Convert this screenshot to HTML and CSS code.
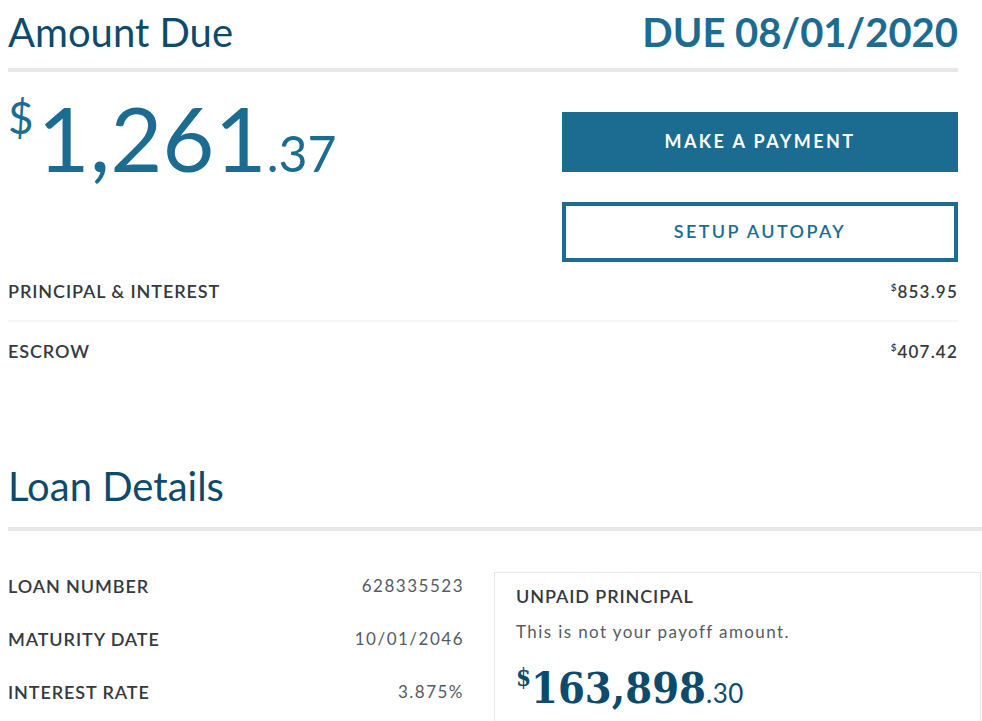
FILE: index.html
```html
<!DOCTYPE html>
<html>
<head>
<meta charset="utf-8">
<link rel="stylesheet" href="styles.css">
</head>
<body>
<section class="due">
  <header class="due-head">
    <h1 class="title">Amount Due</h1>
    <div class="due-date">DUE 08/01/2020</div>
  </header>
  <div class="due-body">
    <div class="amount"><span class="cur">$</span><span class="whole">1,261</span><span class="cents">.37</span></div>
    <div class="actions">
      <a class="btn btn-solid">MAKE A PAYMENT</a>
      <a class="btn btn-outline">SETUP AUTOPAY</a>
    </div>
  </div>
  <div class="breakdown">
    <div class="brow"><span class="blabel">PRINCIPAL &amp; INTEREST</span><span class="bval"><sup>$</sup>853.95</span></div>
    <div class="brow"><span class="blabel">ESCROW</span><span class="bval"><sup>$</sup>407.42</span></div>
  </div>
</section>
<section class="loan">
  <h2 class="title loan-title">Loan Details</h2>
  <div class="loan-body">
    <dl class="facts">
      <div class="fact"><dt>LOAN NUMBER</dt><dd>628335523</dd></div>
      <div class="fact"><dt>MATURITY DATE</dt><dd>10/01/2046</dd></div>
      <div class="fact"><dt>INTEREST RATE</dt><dd>3.875%</dd></div>
    </dl>
    <div class="card">
      <div class="card-label">UNPAID PRINCIPAL</div>
      <p class="card-note">This is not your payoff amount.</p>
      <div class="principal"><span class="pcur">$</span><span class="pwhole">163,898</span><span class="pcents">.30</span></div>
    </div>
  </div>
</section>
</body>
</html>
```
FILE: styles.css
```css
html, body { background: #fff; }
body {
  margin: 0;
  padding: 8px 8px 0;
  font-family: Lato, "Open Sans", sans-serif;
  color: #343a40;
  overflow: hidden;
}
.due { width: 950px; }
.due-head {
  display: flex;
  justify-content: space-between;
  align-items: baseline;
  border-bottom: 4px solid #e8e8e8;
  padding-bottom: 12px;
}
.title {
  margin: 0;
  font-size: 40px;
  line-height: 48px;
  font-weight: 400;
  color: #0d4a6b;
}
.due-date {
  font-size: 40px;
  line-height: 48px;
  font-weight: 700;
  color: #1c6b91;
}
.due-body {
  display: grid;
  grid-template-columns: 1fr 396px;
}
.amount {
  color: #1c6b91;
  line-height: 90px;
  padding-top: 20px;
}
.cur {
  font-size: 44px;
  vertical-align: top;
  position: relative;
  top: -20px;
  margin-right: 4px;
}
.whole { font-size: 90px; }
.cents { font-size: 50px; }
.actions {
  padding-top: 40px;
  display: flex;
  flex-direction: column;
  gap: 30px;
}
.btn {
  display: flex;
  align-items: center;
  justify-content: center;
  height: 60px;
  box-sizing: border-box;
  padding-bottom: 3px;
  font-size: 18px;
  font-weight: 700;
  letter-spacing: 2.4px;
}
.btn-solid { background: #1c6b91; color: #fff; }
.btn-outline { border: 4px solid #1c6b91; color: #1c6b91; font-weight: 600; }
.brow {
  display: flex;
  justify-content: space-between;
  align-items: center;
  height: 58px;
}
.brow + .brow { border-top: 2px solid #f6f6f6; }
.blabel {
  font-size: 18px;
  font-weight: 600;
  letter-spacing: 0.9px;
}
.bval {
  font-size: 17px;
  font-weight: 600;
  letter-spacing: 1.2px;
}
.bval sup { font-size: 10px; vertical-align: 7px; letter-spacing: 0; margin-right: 1px; }

.loan { width: 974px; margin-top: 82px; }
.loan-title {
  border-bottom: 4px solid #e8e8e8;
  padding-bottom: 17px;
}
.loan-body {
  display: grid;
  grid-template-columns: 456px 487px;
  column-gap: 30px;
  padding-top: 24px;
  align-items: start;
}
.facts { margin: 0; padding-top: 4px; }
.fact {
  display: flex;
  justify-content: space-between;
  align-items: center;
  height: 53px;
}
.fact dt {
  font-size: 18px;
  font-weight: 600;
  letter-spacing: 0.9px;
}
.fact dd {
  margin: 0;
  font-size: 17px;
  color: #555b61;
  letter-spacing: 1.5px;
}
.card {
  margin-top: 17px;
  border: 1px solid #e8e8e8;
  padding: 11px 21px 20px;
}
.card-label {
  font-size: 18px;
  line-height: 24px;
  font-weight: 600;
  letter-spacing: 0.9px;
}
.card-note {
  margin: 12px 0 0;
  font-size: 17px;
  line-height: 24px;
  color: #555b61;
  letter-spacing: 1.4px;
}
.principal {
  color: #0d4a6b;
  line-height: 50px;
  margin-top: 19px;
}
.pcur {
  font-family: "DejaVu Serif", serif;
  font-stretch: condensed;
  font-weight: 700;
  font-size: 24px;
  vertical-align: top;
  position: relative;
  top: -10px;
}
.pwhole {
  font-family: "DejaVu Serif", serif;
  font-stretch: condensed;
  font-weight: 700;
  font-size: 43px;
}
.pcents { font-size: 26px; letter-spacing: 0.5px; }
```
